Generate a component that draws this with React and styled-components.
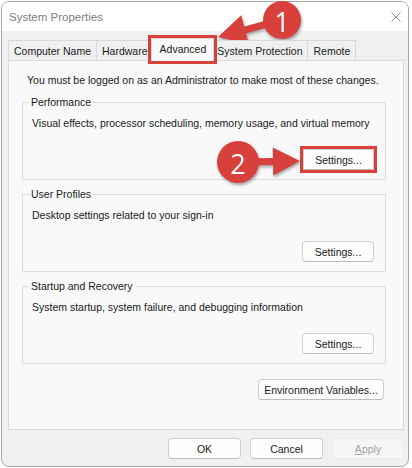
import React from 'react';
import styled, { createGlobalStyle } from 'styled-components';

const GlobalStyle = createGlobalStyle`
  html, body {
    margin: 0;
    padding: 0;
    background: #ffffff;
  }
  body {
    font-family: "Liberation Sans", Arial, sans-serif;
  }
`;

const RED = '#d8403c';

const Stage = styled.div`
  position: relative;
  width: 412px;
  height: 468px;
  padding: 1px 0 0 1px;
  box-sizing: border-box;
`;

const Window = styled.div`
  width: 408px;
  height: 466px;
  box-sizing: border-box;
  border: 1px solid #a9a9a9;
  border-radius: 8px;
  overflow: hidden;
  background: #f0f0f0;
  display: flex;
  flex-direction: column;
  font-size: 10.5px;
  color: #1a1a1a;
`;

const TitleBar = styled.div`
  flex: none;
  height: 29px;
  background: #ffffff;
  display: flex;
  align-items: center;
  justify-content: space-between;
  padding: 0 7px 0 7px;
`;

const Title = styled.span`
  font-size: 11.5px;
  color: #7f7f7f;
`;

const TabStrip = styled.div`
  flex: none;
  height: 29px;
  box-sizing: border-box;
  display: flex;
  align-items: flex-end;
  padding-left: 6px;
`;

const Tab = styled.div`
  position: relative;
  box-sizing: border-box;
  height: ${(p) => (p.$active ? '23px' : '20px')};
  display: flex;
  align-items: center;
  padding: ${(p) => (p.$active ? '0 7px 2px 8px' : '0 5px')};
  margin: ${(p) => (p.$active ? '0 -2px -1px -3px' : '0 0 0 -1px')};
  border: 1px solid #d9d9d9;
  border-bottom: none;
  background: ${(p) => (p.$active ? '#f9f9f9' : '#f0f0f0')};
  z-index: ${(p) => (p.$active ? 2 : 1)};
  white-space: nowrap;
  outline: ${(p) => (p.$marked ? `3px solid ${RED}` : 'none')};

  &:first-child {
    margin-left: 0;
  }
`;

const Panel = styled.div`
  flex: none;
  height: 370px;
  box-sizing: border-box;
  margin: 0 4px 0 6px;
  border: 1px solid #d9d9d9;
  background: #f9f9f9;
  padding: 11px 17px 0 13px;
  display: flex;
  flex-direction: column;
`;

const Note = styled.p`
  margin: 0 0 0 5px;
  line-height: 16px;
  white-space: nowrap;
`;

const Group = styled.fieldset`
  margin: 6px 0 0;
  min-width: 0;
  border: 1px solid #dcdcdc;
  padding: 0 11px 9px 9px;

  & + & {
    margin-top: 6px;
  }
`;

const Legend = styled.legend`
  line-height: 16px;
  padding: 0 2px;
  margin-left: -3px;
`;

const Description = styled.div`
  margin-top: 5px;
  line-height: 16px;
  white-space: nowrap;
`;

const ButtonRow = styled.div`
  display: flex;
  justify-content: flex-end;
  margin-top: ${(p) => p.$gap || 18}px;
  margin-right: ${(p) => p.$inset || 0}px;
`;

const Button = styled.button`
  box-sizing: border-box;
  width: ${(p) => p.$w}px;
  height: 21px;
  padding: 0;
  font-family: inherit;
  font-size: 10.5px;
  color: ${(p) => (p.disabled ? '#a3a3a3' : '#1a1a1a')};
  background: ${(p) => (p.disabled ? '#f6f6f6' : '#fdfdfd')};
  border: 1px solid ${(p) => (p.disabled ? '#ebebeb' : '#d0d0d0')};
  border-bottom-color: ${(p) => (p.disabled ? '#ebebeb' : '#bdbdbd')};
  border-radius: ${(p) => (p.$marked ? 0 : 4)}px;
  box-shadow: ${(p) => (p.$marked ? `0 0 0 3px ${RED}` : 'none')};
`;

const Footer = styled.div`
  flex: none;
  display: flex;
  justify-content: flex-end;
  gap: 9px;
  padding: 8px 4px 7px 0;
`;

const Overlay = styled.svg`
  position: absolute;
  left: 0;
  top: 0;
  pointer-events: none;
  overflow: visible;
`;

const callouts = [
  { label: '1', c: [282, 20], r: 19, tip: [218, 37], head: 28, half: 15 },
  { label: '2', c: [238, 162], r: 21, tip: [300, 161], head: 27, half: 14 },
];

function arrowPoints({ c, tip, head, half }) {
  const dx = tip[0] - c[0];
  const dy = tip[1] - c[1];
  const len = Math.hypot(dx, dy);
  const ux = dx / len;
  const uy = dy / len;
  const nx = -uy;
  const ny = ux;
  const bx = tip[0] - ux * head;
  const by = tip[1] - uy * head;
  const shaft = 3.5;
  const pts = [
    [c[0] + nx * shaft, c[1] + ny * shaft],
    [bx + nx * shaft, by + ny * shaft],
    [bx + nx * half, by + ny * half],
    tip,
    [bx - nx * half, by - ny * half],
    [bx - nx * shaft, by - ny * shaft],
    [c[0] - nx * shaft, c[1] - ny * shaft],
  ];
  return pts.map((p) => p.map((v) => v.toFixed(1)).join(',')).join(' ');
}

const Callout = ({ data }) => (
  <g style={{ filter: 'drop-shadow(1px 2px 1.5px rgba(0,0,0,0.35))' }}>
    <polygon points={arrowPoints(data)} fill={RED} />
    <circle cx={data.c[0]} cy={data.c[1]} r={data.r} fill={RED} />
    <text
      x={data.c[0]}
      y={data.c[1] + 1}
      fill="#ffffff"
      fontSize="27"
      fontFamily="'Open Sans', 'Noto Sans', sans-serif"
      textAnchor="middle"
      dominantBaseline="central"
    >
      {data.label}
    </text>
  </g>
);

const CloseIcon = () => (
  <svg width="10" height="10" viewBox="0 0 10 10">
    <path d="M0.5 0.5 L9.5 9.5 M9.5 0.5 L0.5 9.5" stroke="#8a8a8a" strokeWidth="1" fill="none" />
  </svg>
);

const groups = [
  { title: 'Performance', text: 'Visual effects, processor scheduling, memory usage, and virtual memory', marked: true },
  { title: 'User Profiles', text: 'Desktop settings related to your sign-in' },
  { title: 'Startup and Recovery', text: 'System startup, system failure, and debugging information' },
];

const tabs = ['Computer Name', 'Hardware', 'Advanced', 'System Protection', 'Remote'];

export default function App() {
  return (
    <>
      <GlobalStyle />
      <Stage>
        <Window>
          <TitleBar>
            <Title>System Properties</Title>
            <CloseIcon />
          </TitleBar>
          <TabStrip>
            {tabs.map((t) => (
              <Tab key={t} $active={t === 'Advanced'} $marked={t === 'Advanced'}>
                {t}
              </Tab>
            ))}
          </TabStrip>
          <Panel>
            <Note>You must be logged on as an Administrator to make most of these changes.</Note>
            {groups.map((g) => (
              <Group key={g.title}>
                <Legend>{g.title}</Legend>
                <Description>{g.text}</Description>
                <ButtonRow>
                  <Button $w={g.marked ? 71 : 72} $marked={g.marked}>Settings...</Button>
                </ButtonRow>
              </Group>
            ))}
            <ButtonRow $gap={15} $inset={2}>
              <Button $w={126}>Environment Variables...</Button>
            </ButtonRow>
          </Panel>
          <Footer>
            <Button $w={73}>OK</Button>
            <Button $w={73}>Cancel</Button>
            <Button $w={72} disabled>
              <u>A</u>pply
            </Button>
          </Footer>
        </Window>
        <Overlay width="412" height="468">
          {callouts.map((c) => (
            <Callout key={c.label} data={c} />
          ))}
        </Overlay>
      </Stage>
    </>
  );
}
